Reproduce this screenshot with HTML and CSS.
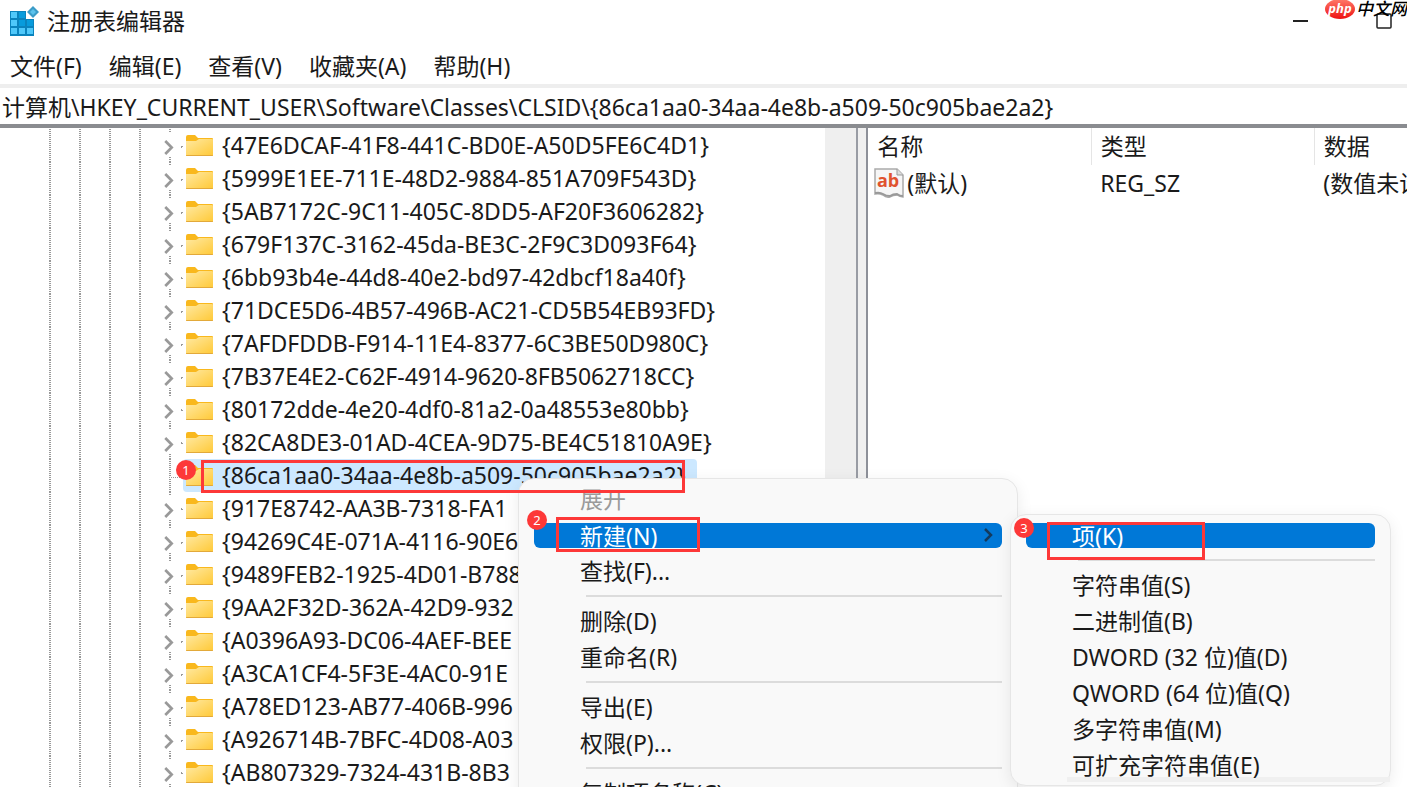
FILE: index.html
```
<!DOCTYPE html>
<html lang="zh-CN">
<head>
    <meta charset="UTF-8">
    <title>注册表编辑器</title>
    <link rel="stylesheet" href="styles.css">
</head>
<body>

    <svg width="0" height="0" class="defs">
        <defs>
            <linearGradient id="paper" x1="0" y1="0" x2="1" y2="1">
                <stop offset="0" stop-color="#ffe9a2"/>
                <stop offset="1" stop-color="#ffca3a"/>
            </linearGradient>
            <linearGradient id="red" x1="0" y1="0" x2="0" y2="1">
                <stop offset="0" stop-color="#ff7a6a"/>
                <stop offset="1" stop-color="#ee1111"/>
            </linearGradient>
            <symbol id="folder" viewBox="0 0 28 22">
                <path d="M0 2q0-2 2-2h7l3 3h14q1 0 1 1v16q0 1-1 1H1q-1 0-1-1z" fill="#f9b81d"/>
                <path d="M0 6h10l3-2h13q1 0 1 1v15H0z" fill="url(#paper)"/>
                <path d="M0 20h27q0 1-1 1H1q-1 0-1-1z" fill="#e2a93a"/>
            </symbol>
            <symbol id="chevron" viewBox="0 0 9 14">
                <path d="M1 1l6 6-6 6" fill="none" stroke="currentColor" stroke-width="2.500"/>
            </symbol>
        </defs>
    </svg>

    <div class="window">
        <header class="titlebar">
            <svg class="app-icon" width="30" height="30" viewBox="0 0 30 30">
                <path d="M1 5h16v8h8v17H1z" fill="#0a83bd"/>
                <path d="M2 6h6v6H2zM2 14h6v6H2zM2 22h6v6H2zM10 22h6v6h-6zM18 22h6v6h-6z" fill="#4fc8fa"/>
                <path d="M10 6h6v6h-6zM10 14h6v6h-6zM18 14h6v6h-6z" fill="#089bdc"/>
                <path d="M24 0l6 6-6 6-6-6z" fill="#3a9cc8"/>
                <path d="M24 3l3 3-3 3-3-3z" fill="#5cc2ec"/>
            </svg>
            <h1>注册表编辑器</h1>
            <div class="window-buttons">
                <button aria-label="最小化"><svg width="16" height="16"><path d="M1 8h15" stroke="#222" stroke-width="2"/></svg></button>
                <button aria-label="最大化"><svg width="16" height="16"><rect x="1" y="1" width="14" height="14" rx="1" fill="none" stroke="#222" stroke-width="1.500"/></svg></button>
            </div>
        </header>

        <nav class="menubar">
            <button>文件(F)</button>
            <button>编辑(E)</button>
            <button>查看(V)</button>
            <button>收藏夹(A)</button>
            <button>帮助(H)</button>
        </nav>

        <input class="address" type="text" aria-label="路径" value="计算机\HKEY_CURRENT_USER\Software\Classes\CLSID\{86ca1aa0-34aa-4e8b-a509-50c905bae2a2}">

        <main class="panes">
            <section class="tree-pane">
                <ul class="tree" id="tree"></ul>
                <div class="scrollbar"></div>
            </section>
            <div class="splitter"></div>
            <section class="list-pane">
                <table>
                    <thead>
                        <tr><th class="name">名称</th><th class="type">类型</th><th>数据</th></tr>
                    </thead>
                    <tbody>
                        <tr>
                            <td>
                                <div class="value-name">
                                    <svg width="31" height="31" viewBox="0 0 31 31">
                                        <path d="M1 1h22l6 6v22q-3 0-6-2-4 0-7 2-4 1-7-2-4-2-8-1z" fill="#f6f6f6" stroke="#aaa" stroke-width="1.500"/>
                                        <path d="M23 1v6h6" fill="#ddd" stroke="#999"/>
                                        <path d="M1 25q5-1 8 1t7 2q3-2 7-2 3 2 6 2" fill="none" stroke="#999" stroke-width="2"/>
                                        <text x="3" y="19" class="ab">ab</text>
                                    </svg>
                                    (默认)
                                </div>
                            </td>
                            <td>REG_SZ</td>
                            <td>(数值未设置)</td>
                        </tr>
                    </tbody>
                </table>
            </section>
        </main>
    </div>

    <div class="menu context-menu">
        <button disabled>展开</button>
        <button class="active">新建(N)<svg width="9" height="14"><use href="#chevron"/></svg></button>
        <button>查找(F)...</button>
        <hr>
        <button>删除(D)</button>
        <button>重命名(R)</button>
        <hr>
        <button>导出(E)</button>
        <button>权限(P)...</button>
        <hr>
        <button>复制项名称(C)</button>
    </div>

    <div class="menu submenu">
        <button class="active">项(K)</button>
        <hr>
        <button>字符串值(S)</button>
        <button>二进制值(B)</button>
        <button>DWORD (32 位)值(D)</button>
        <button>QWORD (64 位)值(Q)</button>
        <button>多字符串值(M)</button>
        <button>可扩充字符串值(E)</button>
    </div>

    <!-- numbered steps -->
    <div class="step step-1"><span>1</span></div>
    <div class="step step-2"><span>2</span></div>
    <div class="step step-3"><span>3</span></div>

    <div class="watermark">
        <svg width="30" height="20" viewBox="0 0 30 20">
            <ellipse cx="15" cy="9" rx="15" ry="10" fill="url(#red)"/>
            <text x="15" y="13" text-anchor="middle">php</text>
        </svg>
        <span>中文网</span>
    </div>

    <script>
const keys = [
    "{47E6DCAF-41F8-441C-BD0E-A50D5FE6C4D1}",
    "{5999E1EE-711E-48D2-9884-851A709F543D}",
    "{5AB7172C-9C11-405C-8DD5-AF20F3606282}",
    "{679F137C-3162-45da-BE3C-2F9C3D093F64}",
    "{6bb93b4e-44d8-40e2-bd97-42dbcf18a40f}",
    "{71DCE5D6-4B57-496B-AC21-CD5B54EB93FD}",
    "{7AFDFDDB-F914-11E4-8377-6C3BE50D980C}",
    "{7B37E4E2-C62F-4914-9620-8FB5062718CC}",
    "{80172dde-4e20-4df0-81a2-0a48553e80bb}",
    "{82CA8DE3-01AD-4CEA-9D75-BE4C51810A9E}",
    "{86ca1aa0-34aa-4e8b-a509-50c905bae2a2}",
    "{917E8742-AA3B-7318-FA1",
    "{94269C4E-071A-4116-90E6",
    "{9489FEB2-1925-4D01-B788",
    "{9AA2F32D-362A-42D9-932",
    "{A0396A93-DC06-4AEF-BEE",
    "{A3CA1CF4-5F3E-4AC0-91E",
    "{A78ED123-AB77-406B-996",
    "{A926714B-7BFC-4D08-A03",
    "{AB807329-7324-431B-8B3"
];
const selected = "{86ca1aa0-34aa-4e8b-a509-50c905bae2a2}";

document.getElementById("tree").innerHTML = keys.map((key) => {
    const isSelected = key === selected;
    const arrow = isSelected ? "" : '<svg class="arrow" width="10" height="15"><use href="#chevron"/></svg>';
    return `<li class="${isSelected ? "selected" : ""}">
        <i></i><i></i><i></i><i></i><i class="branch">${arrow}</i>
        <span class="key"><svg width="28" height="22"><use href="#folder"/></svg><span>${key}</span></span>
    </li>`;
}).join("");
    </script>
</body>
</html>
```

FILE: styles.css
```
* {
    box-sizing: border-box;
}

body {
    margin: 0;
    overflow: hidden;
    background: #fff;
    color: #1a1a1a;
    font-family: "Noto Sans", "Noto Sans CJK SC", sans-serif;
    font-size: 23px;
}

.defs {
    position: absolute;
}

button {
    padding: 0;
    border: none;
    background: none;
    color: inherit;
    font: inherit;
    white-space: nowrap;
}

.window {
    display: flex;
    flex-direction: column;
    height: 100vh;
}

/* title and menu bar */
.titlebar {
    display: flex;
    align-items: center;
    height: 42px;
    padding: 0 15px 0 9px;
}

.titlebar h1 {
    margin: 0 0 0 8px;
    font-size: 23px;
    font-weight: normal;
    line-height: 30px;
}

.window-buttons {
    display: flex;
    gap: 68px;
    margin-left: auto;
}

.window-buttons svg {
    display: block;
}

.menubar {
    display: flex;
    gap: 27px;
    height: 46px;
    padding: 4px 10px 0;
    border-bottom: 4px solid #eee;
}

.address {
    height: 36px;
    padding: 0 2px;
    border: none;
    outline: none;
    color: inherit;
    font: inherit;
}

/* panes */
.panes {
    display: flex;
    flex: 1;
    min-height: 0;
    border-top: 4px solid #8a8c90;
}

.tree-pane {
    display: flex;
    width: 61%;
    border-right: 2px solid #999ca4;
}

.tree {
    flex: 1;
    margin: 0;
    padding: 1px 0 0;
    overflow: hidden;
    list-style: none;
}

.tree li {
    display: flex;
    height: 33px;
    padding-left: 35px;
    white-space: nowrap;
}

.tree i {
    width: 30px;
    background: repeating-linear-gradient(#999 0 1px, #fff 1px 2px) 14px 0 / 2px 100% no-repeat;
}

.tree .branch {
    width: 28px;
    background: radial-gradient(#999 1px, transparent 1px) 25px 16px / 3px 3px no-repeat,
        linear-gradient(transparent 4px, #fff 4px 28px, transparent 28px),
        repeating-linear-gradient(#999 0 1px, #fff 1px 2px) 14px 0 / 2px 100% no-repeat;
}

.tree .selected .branch {
    background: repeating-linear-gradient(90deg, #999 0 1px, #fff 1px 2px) 14px 18px / 14px 1px no-repeat,
        repeating-linear-gradient(#999 0 1px, #fff 1px 2px) 14px 0 / 2px 100% no-repeat;
}

.arrow {
    display: block;
    margin: 11px 0 0 9px;
    color: #999;
}

.key {
    display: flex;
    align-items: center;
    gap: 8px;
    padding: 0 12px 0 3px;
}

.key span {
    height: 33px;
    line-height: 33px;
}

.selected .key {
    border-radius: 4px;
    background: #cce8ff;
}

.scrollbar {
    width: 31px;
    background: #efefef;
}

.splitter {
    width: 8px;
    background: #f0f0f0;
}

.list-pane {
    flex: 1;
    min-width: 0;
    overflow: hidden;
    border-left: 2px solid #8d9099;
}

table {
    width: 100%;
    border-collapse: collapse;
    table-layout: fixed;
}

th {
    height: 37px;
    padding: 0 9px;
    border-right: 1px solid #e5e5e5;
    font-weight: normal;
    line-height: 37px;
    text-align: left;
}

th:last-child {
    border-right: none;
}

.name,
.type {
    width: 223px;
}

td {
    height: 36px;
    padding: 0 9px;
    line-height: 36px;
    white-space: nowrap;
}

.value-name {
    display: flex;
    align-items: center;
    gap: 2px;
    margin-left: -3px;
}

.ab {
    fill: #e0532f;
    font: bold 18px "Open Sans", sans-serif;
}

/* popup menus */
.menu {
    position: absolute;
    z-index: 0;
    display: flex;
    flex-direction: column;
    padding: 3px 15px 1px;
    border: 1px solid #e6e6e6;
    border-radius: 16px;
    background: #f9f9f9;
    box-shadow: 0 4px 16px rgba(0, 0, 0, 0.08);
}

.menu button {
    display: flex;
    align-items: center;
    height: 36px;
    padding: 0 9px 4px 46px;
}

.menu button:disabled {
    color: #9a9a9a;
}

.menu .active {
    height: 25px;
    margin: 5px 0 6px;
    padding-bottom: 2px;
    border-radius: 6px;
    background: #0078d7;
    color: #fff;
}

.menu .active svg {
    margin-left: auto;
    color: #143a5c;
}

.menu hr {
    width: calc(100% - 52px);
    height: 2px;
    margin: 5px 0 7px 52px;
    border: none;
    background: #dcdcdc;
}

.context-menu {
    top: 478px;
    left: 518px;
    width: 500px;
}

.submenu {
    top: 514px;
    left: 1010px;
    width: 381px;
}

.submenu::after {
    content: "";
    position: absolute;
    z-index: -1;
    right: 0;
    bottom: 3px;
    left: 56px;
    height: 5px;
    background: #f0f0f0;
}

/* step marks over the window */
.step {
    position: absolute;
    border: 3px solid #fd3838;
}

.step span {
    position: absolute;
    width: 20px;
    height: 20px;
    border-radius: 50%;
    background: #fd3838;
    color: #fff;
    font-size: 13px;
    line-height: 20px;
    text-align: center;
}

.step-1 {
    top: 460px;
    left: 201px;
    width: 484px;
    height: 33px;
}

.step-1 span {
    top: -3px;
    left: -28px;
}

.step-2 {
    top: 517px;
    left: 556px;
    width: 144px;
    height: 35px;
}

.step-2 span {
    top: -10px;
    left: -32px;
}

.step-3 {
    top: 522px;
    left: 1047px;
    width: 158px;
    height: 38px;
}

.step-3 span {
    top: -7px;
    left: -36px;
}

.watermark {
    position: absolute;
    top: 0;
    right: 0;
    display: flex;
    gap: 1px;
    color: #000;
    font-size: 17px;
    font-style: italic;
    font-weight: 500;
    line-height: 18px;
}

.watermark text {
    fill: #fff;
    font: italic bold 13px "Open Sans", sans-serif;
}
```
